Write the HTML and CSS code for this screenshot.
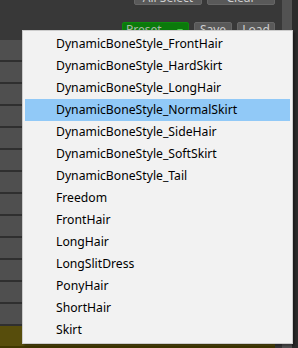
FILE: index.html
```html
<!DOCTYPE html>
<html>
<head>
<meta charset="utf-8">
<link rel="stylesheet" href="styles.css">
</head>
<body>
<div class="app">
  <div class="main">
    <div class="top">
      <div class="btnrow first">
        <div class="btn wide">All Select</div>
        <div class="btn wide">Clear</div>
      </div>
      <div class="btnrow second">
        <div class="btn preset"><span>Preset</span><span class="arrow"></span></div>
        <div class="btn small">Save</div>
        <div class="btn small">Load</div>
      </div>
    </div>
    <div class="rows">
      <div class="row"></div><div class="row"></div><div class="row"></div><div class="row"></div>
      <div class="row"></div><div class="row"></div><div class="row"></div><div class="row"></div>
      <div class="row"></div><div class="row"></div><div class="row"></div><div class="row"></div>
      <div class="row"></div><div class="row olive"></div>
    </div>
  </div>
  <div class="scroll"></div>
  <div class="edge"></div>
</div>
<div class="menu">
  <div class="item">DynamicBoneStyle_FrontHair</div>
  <div class="item">DynamicBoneStyle_HardSkirt</div>
  <div class="item">DynamicBoneStyle_LongHair</div>
  <div class="item active">DynamicBoneStyle_NormalSkirt</div>
  <div class="item">DynamicBoneStyle_SideHair</div>
  <div class="item">DynamicBoneStyle_SoftSkirt</div>
  <div class="item">DynamicBoneStyle_Tail</div>
  <div class="item">Freedom</div>
  <div class="item">FrontHair</div>
  <div class="item">LongHair</div>
  <div class="item">LongSlitDress</div>
  <div class="item">PonyHair</div>
  <div class="item">ShortHair</div>
  <div class="item">Skirt</div>
</div>
</body>
</html>
```

FILE: styles.css
```css
html, body {
  margin: 0;
  padding: 0;
}
body {
  width: 298px;
  height: 348px;
  overflow: hidden;
  background: #383838;
  font-family: "Noto Sans", "Liberation Sans", sans-serif;
  position: relative;
}
.app {
  display: flex;
  height: 348px;
}
.main {
  width: 282px;
  display: flex;
  flex-direction: column;
}
.top {
  height: 40px;
  display: flex;
  flex-direction: column;
  align-items: flex-end;
  padding-right: 7px;
}
.btnrow {
  display: flex;
  gap: 5px;
}
.btnrow.first {
  margin-top: -14px;
  height: 19px;
}
.btnrow.second {
  margin-top: 17px;
  height: 18px;
}
.btn {
  box-sizing: border-box;
  background: #595959;
  border: 1px solid #666;
  border-radius: 2px;
  color: #cfcfcf;
  font-size: 12px;
  text-align: center;
}
.first .btn {
  padding-top: 3px;
  line-height: 16px;
}
.wide {
  width: 68px;
}
.second .btn {
  line-height: 14px;
  height: 18px;
}
.small {
  width: 38px;
}
.preset {
  width: 67px;
  background: #0b7a0b;
  border-color: #0e8a0e;
  color: #a9b9a9;
  display: flex;
  justify-content: space-between;
  padding: 0 5px 0 3px;
  text-align: left;
}
.arrow {
  width: 0;
  height: 0;
  border-left: 3.5px solid transparent;
  border-right: 3.5px solid transparent;
  border-top: 4px solid #4cd44c;
  margin-top: 6px;
}
.rows {
  padding-right: 7px;
}
.row {
  height: 20px;
  background: #4f4f4f;
  border-bottom: 2px solid #2f2f2f;
}
.row.olive {
  background: #574d0c;
  border-bottom: 2px solid #3f3800;
}
.scroll {
  width: 10px;
  background: #525252;
}
.edge {
  flex: 1;
  background: #2b2b2b;
}
.menu {
  position: absolute;
  left: 22px;
  top: 30px;
  width: 271px;
  box-sizing: border-box;
  padding: 2px;
  background: #f2f2f2;
  border: 1px solid #cccccc;
  box-shadow: 2px 2px 2px rgba(0, 0, 0, 0.35);
  display: flex;
  flex-direction: column;
}
.item {
  height: 22px;
  line-height: 22px;
  padding-left: 31px;
  font-size: 12.2px;
  color: #000;
  white-space: nowrap;
}
.item.active {
  background: #91c9f7;
}
```
